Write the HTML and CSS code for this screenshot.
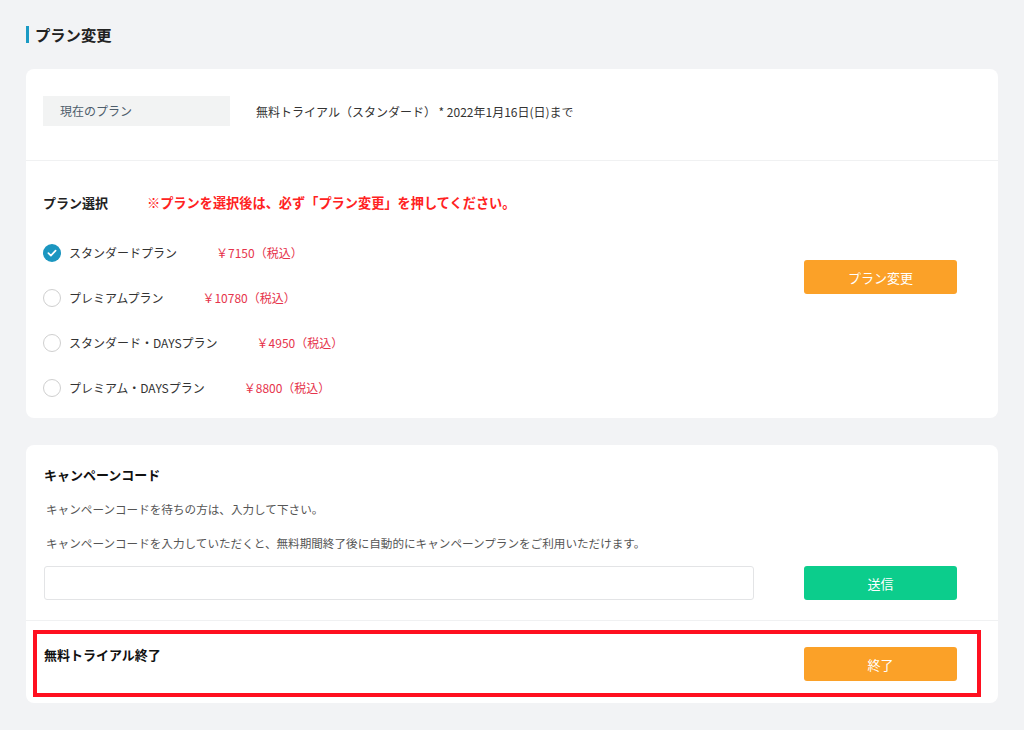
FILE: index.html
```html
<!DOCTYPE html>
<html lang="ja">
<head>
<meta charset="utf-8">
<title>プラン変更</title>
<link rel="stylesheet" href="styles.css">
</head>
<body>
<div class="page">
  <h1 class="page-title">プラン変更</h1>

  <div class="card">
    <div class="current">
      <div class="current-label">現在のプラン</div>
      <div class="current-value">無料トライアル（スタンダード） * 2022年1月16日(日)まで</div>
    </div>
    <div class="select">
      <div class="select-head">
        <span class="select-title">プラン選択</span>
        <span class="select-note">※プランを選択後は、必ず「プラン変更」を押してください。</span>
      </div>
      <div class="select-body">
        <ul class="plans">
          <li class="plan">
            <span class="radio checked"><svg viewBox="0 0 18 18" width="18" height="18"><circle cx="9" cy="9" r="9" fill="#1b96c0"/><path d="M5.4 9.2 L7.9 11.6 L12.6 6.6" fill="none" stroke="#fff" stroke-width="1.7" stroke-linecap="round" stroke-linejoin="round"/></svg></span>
            <span class="plan-name">スタンダードプラン</span>
            <span class="plan-price">￥7150（税込）</span>
          </li>
          <li class="plan">
            <span class="radio"></span>
            <span class="plan-name">プレミアムプラン</span>
            <span class="plan-price">￥10780（税込）</span>
          </li>
          <li class="plan">
            <span class="radio"></span>
            <span class="plan-name">スタンダード・DAYSプラン</span>
            <span class="plan-price">￥4950（税込）</span>
          </li>
          <li class="plan">
            <span class="radio"></span>
            <span class="plan-name">プレミアム・DAYSプラン</span>
            <span class="plan-price">￥8800（税込）</span>
          </li>
        </ul>
        <button class="btn btn-orange btn-change">プラン変更</button>
      </div>
    </div>
  </div>

  <div class="card card2">
    <div class="campaign">
      <h2 class="sec-title">キャンペーンコード</h2>
      <p class="desc">キャンペーンコードを待ちの方は、入力して下さい。</p>
      <p class="desc">キャンペーンコードを入力していただくと、無料期間終了後に自動的にキャンペーンプランをご利用いただけます。</p>
      <div class="code-row">
        <input class="code-input" type="text">
        <button class="btn btn-green">送信</button>
      </div>
    </div>
    <div class="end">
      <div class="highlight">
        <h2 class="sec-title end-title">無料トライアル終了</h2>
        <button class="btn btn-orange btn-end">終了</button>
      </div>
    </div>
  </div>
</div>
</body>
</html>
```

FILE: styles.css
```css
* { box-sizing: border-box; }
html, body { margin: 0; padding: 0; }
body {
  background: #f2f3f5;
  font-family: "Noto Sans CJK JP", "Noto Sans", sans-serif;
  color: #333;
}
.page { padding: 26px 26px 27px 26px; }

.page-title {
  margin: 0;
  font-size: 15.3px;
  line-height: 17px;
  font-weight: 700;
  color: #222;
  border-left: 3px solid #1a9ac4;
  padding-left: 6px;
}

.card {
  background: #fff;
  border-radius: 8px;
  margin-top: 26px;
}
.card2 { margin-top: 27px; }

.current {
  display: flex;
  align-items: center;
  padding: 27px 17px 34px 17px;
  border-bottom: 1px solid #f0f1f2;
}
.current-label {
  width: 187px;
  height: 30px;
  line-height: 30px;
  background: #f2f3f3;
  padding-left: 17px;
  font-size: 12px;
  color: #4d5d6b;
}
.current-value {
  margin-left: 26px;
  font-size: 12px;
  color: #333;
  white-space: pre;
}

.select { padding: 30px 41px 8px 17px; }
.select-head {
  display: flex;
  align-items: center;
  height: 22px;
}
.select-title {
  font-size: 13px;
  font-weight: 700;
  color: #222;
  width: 104px;
}
.select-note {
  font-size: 13.2px;
  font-weight: 700;
  color: #ff2222;
}
.select-body {
  display: flex;
  justify-content: space-between;
  align-items: flex-start;
  margin-top: 17px;
}
.plans { list-style: none; margin: 0; padding: 0; }
.plan {
  display: flex;
  align-items: center;
  height: 45px;
}
.radio {
  width: 18px;
  height: 18px;
  border-radius: 50%;
  border: 1px solid #cfcfcf;
  margin-right: 8px;
  display: flex;
}
.radio.checked { border: none; }
.plan-name { font-size: 12px; color: #333; }
.plan-price { font-size: 12px; color: #e6344c; margin-left: 39px; }

.btn {
  width: 153px;
  height: 34px;
  border: none;
  border-radius: 3px;
  color: #fff;
  font-family: inherit;
  font-size: 13px;
  padding: 0;
}
.btn-orange { background: #fba128; }
.btn-green { background: #0ccd8c; }
.btn-change { margin-top: 30px; }

.campaign {
  padding: 20px 41px 20px 18px;
  border-bottom: 1px solid #f0f1f2;
}
.sec-title {
  margin: 0;
  font-size: 13px;
  line-height: 20px;
  font-weight: 700;
  color: #111;
}
.desc {
  margin: 14px 0 0 2px;
  font-size: 11.6px;
  line-height: 20px;
  color: #555;
}
.code-row {
  display: flex;
  justify-content: space-between;
  margin-top: 13px;
}
.code-input {
  width: 710px;
  height: 34px;
  border: 1px solid #e3e4e6;
  border-radius: 3px;
  background: #fff;
}

.end { padding: 9px 17px 6px 7px; }
.highlight {
  border: 4px solid #ff1020;
  height: 67px;
  display: flex;
  justify-content: space-between;
  align-items: flex-start;
  padding: 11px 20px 0 7px;
}
.btn-end { margin-top: 2px; }
```
